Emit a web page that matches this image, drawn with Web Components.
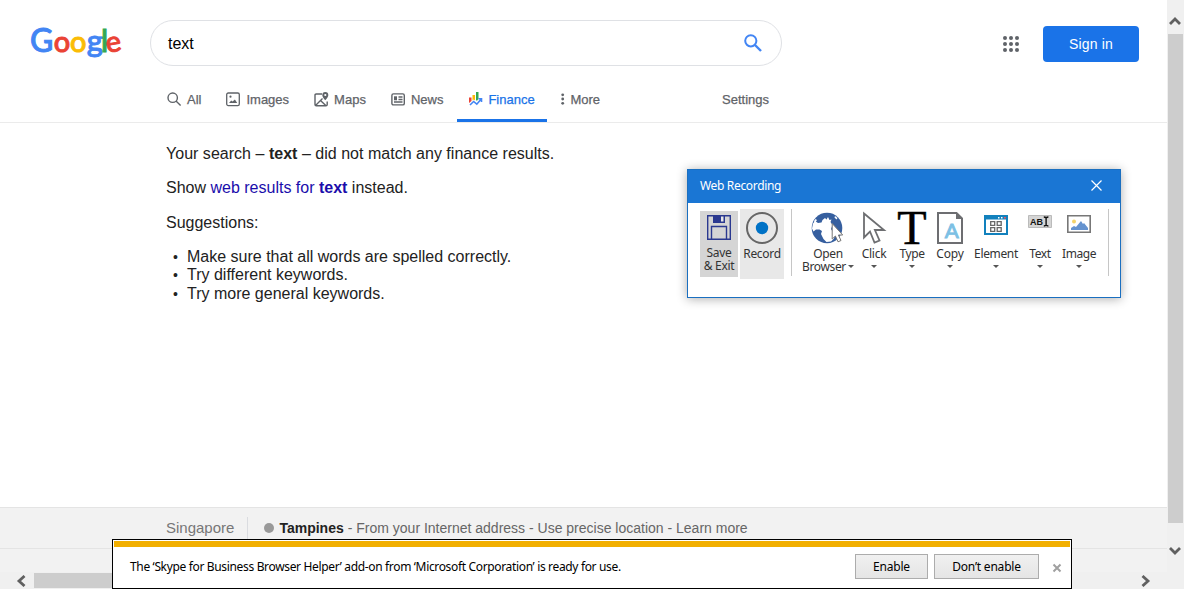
<!DOCTYPE html>
<html lang="en">
<head>
<meta charset="utf-8">
<title>text - Search</title>
<style>
html,body{margin:0;height:100%;overflow:hidden;background:#fff}
body{font-family:"Liberation Sans",Arial,sans-serif;color:#222}
</style>
</head>
<body>
<search-app></search-app>
<script>
const define = (name, html) => {
  const t = document.createElement('template');
  t.innerHTML = html;
  customElements.define(name, class extends HTMLElement {
    constructor() {
      super();
      this.attachShadow({mode: 'open'}).append(t.content.cloneNode(true));
    }
  });
};

define('brand-logo', `
<style>:host{display:block;width:96px;height:46px}svg{display:block}</style>
<svg width="96" height="46" viewBox="0 0 96 46" font-family="Lato,sans-serif" font-weight="500" stroke-width=".9">
<text y="33.500"><tspan x="0" font-size="32" fill="#4285f4" stroke="#4285f4">G</tspan><tspan x="23.800" font-size="29" fill="#ea4335" stroke="#ea4335">o</tspan><tspan x="39.900" font-size="29" fill="#fbbc05" stroke="#fbbc05">o</tspan><tspan x="56.700" font-size="31" fill="#4285f4" stroke="#4285f4">g</tspan><tspan x="71" font-size="30" fill="#34a853" stroke="#34a853">l</tspan><tspan x="77.300" y="35" font-size="29" fill="#ea4335" stroke="#ea4335" rotate="-10">e</tspan></text>
</svg>`);

define('search-box', `
<style>
:host{display:flex;box-sizing:border-box;width:632px;height:46px;border:1px solid #dfe1e5;border-radius:23px;align-items:center;justify-content:space-between;padding:1px 19px 0 17px;font-size:16px;color:#000}
svg{display:block;margin-top:-2px}
span{padding-top:1px}
</style>
<span><slot></slot></span>
<svg width="18" height="18" viewBox="0 0 18 18" fill="none" stroke="#4285f4" stroke-width="2"><circle cx="6.8" cy="6.8" r="5.6"/><path d="M11 11l6 6" stroke-width="2.4"/></svg>`);

define('nav-tab', `
<style>
:host{display:flex;box-sizing:border-box;height:43px;align-items:center;color:#5f6368;font-size:13px;line-height:16px;padding-bottom:3px;white-space:nowrap;-webkit-text-stroke:.25px currentColor}
:host([active]){color:#1a73e8;box-shadow:inset 0 -3px #1a73e8}
::slotted(svg){display:block;margin-right:5px;flex:none}
span{padding-top:2px}
</style><slot name="icon"></slot><span><slot></slot></span>`);

define('page-header', `
<style>
:host{display:block;height:122px;border-bottom:1px solid #ebebeb}
.top{display:flex;height:79px;padding-top:0;box-sizing:border-box}
brand-logo{margin:18px 0 0 30px}
search-box{margin:20px 0 0 24px}
.apps{display:block;margin:36px 0 0 221px}
.sign{margin:26px 0 0 23px;width:96px;height:36px;border-radius:4px;background:#1a73e8;color:#fff;font-size:14px;letter-spacing:.2px;display:flex;align-items:center;justify-content:center}
nav{display:flex;height:43px}
.a{margin-left:167px}.b{margin-left:25px}.c{margin-left:25px}.d{margin-left:25px}
.e{margin-left:14px;width:90px;box-sizing:border-box;padding-left:12px}.f{margin-left:14px}.g{margin-left:122px}
</style>
<div class="top"><brand-logo></brand-logo><search-box>text</search-box>
<svg class="apps" width="17" height="17" viewBox="0 0 17 17" fill="#5f6368"><circle cx="2" cy="2" r="2"/><circle cx="8" cy="2" r="2"/><circle cx="14" cy="2" r="2"/><circle cx="2" cy="8" r="2"/><circle cx="8" cy="8" r="2"/><circle cx="14" cy="8" r="2"/><circle cx="2" cy="14" r="2"/><circle cx="8" cy="14" r="2"/><circle cx="14" cy="14" r="2"/></svg>
<div class="sign">Sign in</div></div>
<nav>
<nav-tab class="a"><svg slot="icon" width="15" height="15" viewBox="0 0 15 15" fill="none" stroke="#5f6368" stroke-width="1.4"><circle cx="5.7" cy="5.7" r="4.7"/><path d="M9 9l4.6 4.6"/></svg>All</nav-tab>
<nav-tab class="b"><svg slot="icon" width="15" height="15" viewBox="0 0 15 15" fill="none" stroke="#5f6368" stroke-width="1.3"><rect x=".7" y="1" width="12.6" height="12.6" rx="1.6"/><g fill="#5f6368" stroke="none"><circle cx="4.5" cy="4.7" r="1.1"/><path d="M3 11l2.2-2.6 1.4 1.2 2.3-2.2L11.200 11z"/></g></svg>Images</nav-tab>
<nav-tab class="c"><svg slot="icon" width="15" height="15" viewBox="0 0 15 15" fill="none" stroke="#5f6368" stroke-width="1.4"><path d="M8 2H2.200Q1 2 1 3.200V12.600Q1 13.800 2.200 13.800H12Q13.200 13.800 13.200 12.600V9.500M1.500 13.500L8.500 6.500M6.500 8.500L11.800 13.500"/><path d="M11.300 0a3 3 0 0 0-3 3c0 2.400 3 5.200 3 5.200s3-2.800 3-5.200a3 3 0 0 0-3-3zm0 1.900a1.100 1.100 0 1 1 0 2.200 1.100 1.100 0 0 1 0-2.200z" fill="#5f6368" stroke="none"/></svg>Maps</nav-tab>
<nav-tab class="d"><svg slot="icon" width="15" height="15" viewBox="0 0 15 15" fill="none" stroke="#5f6368" stroke-width="1.4"><rect x=".9" y="1.900" width="12.400" height="11" rx="1.500"/><path d="M7.500 5h4M7.500 7.500h4M3 10h8.500"/><path d="M3 4.300h3v4H3z" fill="#5f6368" stroke="none"/></svg>News</nav-tab>
<nav-tab class="e" active><svg slot="icon" width="14" height="15" viewBox="0 0 14 15" style="margin-right:5px"><path fill="#ea4335" d="M0 5.500h2.500V9L0 11z"/><path fill="#fbbc05" d="M3.500 3H6v5.500L4.700 7.500 3.500 8.500z"/><path fill="#34a853" d="M7 0h2.500v7L8 8.700 7 8.300z"/><path d="M1 13l3.600-3.500 3.200 2.700L12.200 7M9.500 6.800h3V10" fill="none" stroke="#4285f4" stroke-width="1.600"/></svg>Finance</nav-tab>
<nav-tab class="f"><svg slot="icon" width="4" height="12" viewBox="0 0 4 12" fill="#5f6368"><circle cx="1.700" cy="1.800" r="1.400"/><circle cx="1.700" cy="6" r="1.400"/><circle cx="1.700" cy="10.300" r="1.400"/></svg>More</nav-tab>
<nav-tab class="g">Settings</nav-tab>
</nav>`);

define('no-results', `
<style>
:host{display:block;padding:22px 0 0 166px;font-size:16px;line-height:18px;height:384px;box-sizing:border-box;color:#222}
p{margin:0 0 16px}.w{letter-spacing:.02px}.s{margin-bottom:16px;padding-top:1px}a{color:#1a0dab}
ul{margin:0;padding:0;list-style:none}li{display:flex;height:18px}li:last-child{padding-top:1px}
li::before{content:"•";width:14px;padding-left:7px;font-size:14px}
</style>
<p class="w">Your search – <b>text</b> – did not match any finance results.</p>
<p>Show <a>web results for <b>text</b></a> instead.</p>
<p class="s">Suggestions:</p>
<ul><li>Make sure that all words are spelled correctly.</li><li>Try different keywords.</li><li>Try more general keywords.</li></ul>`);

define('page-footer', `
<style>
:host{display:block;height:65px;background:#f2f2f2;border-top:1px solid #e4e4e4;box-sizing:border-box}
.row{display:flex;align-items:center;height:40px;border-bottom:1px solid #e4e4e4;padding-left:166px;font-size:14px;color:#70757a;white-space:nowrap}
.c{font-size:15px;padding:0 13px 2px 0;color:#777}
.l{display:flex;align-items:center;border-left:1px solid #dadce0;height:22px;padding-left:16px}
i{width:10px;height:10px;border-radius:50%;background:#999;margin-right:5px}
b{color:#222;margin-right:4px}.t{color:#666}
</style>
<div class="row"><span class="c">Singapore</span><span class="l"><i></i><b>Tampines</b><span class="t">- From your Internet address - Use precise location - Learn more</span></span></div>`);

define('v-scroll', `
<style>
:host{display:flex;flex-direction:column;align-items:center;background:#f0f0f0;height:589px;box-sizing:border-box}
.up{margin-top:16px}.th{width:15px;height:489px;background:#cdcdcd;margin:8px 0 22px;align-self:flex-start;margin-left:1px}
svg{display:block;margin-left:-1px;flex:none}
</style>
<svg class="up" width="12" height="10" viewBox="0 0 12 10" fill="none" stroke="#606060" stroke-width="2.800"><path d="M1 8l5-5 5 5"/></svg>
<div class="th"></div>
<svg width="12" height="10" viewBox="0 0 12 10" fill="none" stroke="#606060" stroke-width="2.800"><path d="M1 3l5 5 5-5"/></svg>`);

define('h-scroll', `
<style>
:host{display:flex;align-items:center;height:17px;background:#f0f0f0;padding:0 16px 0 16px;box-sizing:border-box}
.th{height:15px;width:700px;background:#cdcdcd;margin-left:8px;margin-right:auto}
</style>
<svg width="10" height="12" viewBox="0 0 10 12" fill="none" stroke="#606060" stroke-width="2.800"><path d="M8.500 1l-5.500 5 5.500 5"/></svg>
<div class="th"></div>
<svg width="10" height="12" viewBox="0 0 10 12" fill="none" stroke="#606060" stroke-width="2.800"><path d="M1.500 1l5.500 5-5.500 5"/></svg>`);

define('tool-button', `
<style>
:host{display:flex;flex-direction:column;align-items:center;font:12px/13px "Noto Sans","Segoe UI",sans-serif;color:#333;white-space:nowrap;text-align:center;box-sizing:border-box;flex:none}
.ic{height:35px;display:flex;align-items:flex-start;justify-content:center}
.lb{height:13px}
.ar{display:none;border:3px solid transparent;border-top-color:#555;border-bottom:0;margin-top:5px}
:host([menu]) .ar{display:block}
</style>
<div class="ic"><slot name="icon"></slot></div><div class="lb"><slot></slot></div><div class="ar"></div>`);

define('recorder-window', `
<style>
:host{display:flex;flex-direction:column;box-sizing:border-box;width:434px;height:129px;background:#fff;border:1px solid #1a6fc0;box-shadow:0 1px 10px rgba(0,0,0,.32);font-family:"Noto Sans","Segoe UI",sans-serif}
header{height:33px;background:#1a76d4;color:#fff;display:flex;align-items:center;justify-content:space-between;padding:0 18px 2px 12px;box-sizing:border-box;font-size:12px;letter-spacing:-.33px}
.bar{display:flex;align-items:flex-start;padding-left:12px}
svg{display:block;overflow:visible}
.save{width:38px;height:66px;background:#d5d5d5;margin-top:8px;padding-top:0}
.rec{width:44px;height:70px;background:#e8e8e8;margin:6px 0 0 2px;padding-top:3px}
.line{width:1px;height:67px;background:#c6c6c6;margin:6px 0 0 7px}
.m{margin-top:9px}
em{font-style:normal;display:inline-block;border:3px solid transparent;border-top-color:#555;border-bottom:0;vertical-align:3px;margin-left:2px}
</style>
<header><span>Web Recording</span><svg width="11" height="11" viewBox="0 0 11 11" stroke="#fff" stroke-width="1.200"><path d="M.5.5l10 10M10.500.5l-10 10"/></svg></header>
<div class="bar">
<tool-button class="save" style="letter-spacing:-.35px"><svg slot="icon" width="24" height="25" viewBox="0 0 24 25" style="margin-top:4px" fill="none" stroke="#2b3990" stroke-width="1.400"><path d="M.7.7h22.600v23.500H.7z"/><path d="M4.500 24V11.500h15V24"/><path d="M6 0h12v8H6z" fill="#2b3990" stroke="none"/><path d="M14 1.500h2.500v5H14z" fill="#e8e8e8" stroke="none"/></svg>Save<br>&amp; Exit</tool-button>
<tool-button class="rec" style="letter-spacing:-.3px"><svg slot="icon" width="32" height="32" viewBox="0 0 32 32"><circle cx="16" cy="16" r="15" fill="none" stroke="#666" stroke-width="2"/><circle cx="16" cy="16" r="6.200" fill="#0072c6"/></svg>Record</tool-button>
<div class="line"></div>
<tool-button class="m" style="width:52px;margin-left:10px;letter-spacing:-.38px"><svg slot="icon" width="32" height="32" viewBox="0 0 32 32" style="margin-left:-2px"><circle cx="16" cy="16" r="15.300" fill="#365f9f"/><path fill="#fff" d="M11.500 8l2.500-2 1.500 1.500 1.500-2.500 1.500 3 2-.5-1 2.500 2 3-1.500 4 1.500 2.500 2.500 2-1 5-3 3-4.500.5-3-3-2.500-5 1-3-2.500-1.500-3.500 0-2.500 2-1.500-3 1-5 2-2.500 3 2 3.500-.5z"/><path d="M3 9l1.500-2 1.500 1-2 3zM24 4l2.500 2-1 1.500-2-2z" fill="#fff"/><path d="M21.200 11.500v15.500l3.200-3 2.600 5.800 3-1.300-2.600-5.500h4.300z" fill="#fff" stroke="#777" stroke-width="1"/></svg>Open<br>Browser<em></em></tool-button>
<tool-button class="m" menu style="width:30px;margin-left:5px;letter-spacing:-.25px"><svg slot="icon" width="24" height="33" viewBox="0 0 24 33" fill="#fff" stroke="#6d6e71" stroke-width="1.800"><path d="M2 1.500v24l6-6 4.500 11 5-2-4.600-10.500H22z"/></svg>Click</tool-button>
<tool-button class="m" menu style="width:28px;margin-left:9px;letter-spacing:-.4px"><svg slot="icon" width="28" height="32" viewBox="0 0 28 32"><text x="14" y="32" text-anchor="middle" font-family="Liberation Serif,serif" font-size="48" letter-spacing="0" stroke="#000" stroke-width=".5" fill="#000">T</text></svg>Type</tool-button>
<tool-button class="m" menu style="width:28px;margin-left:10px;letter-spacing:-.2px"><svg slot="icon" width="26" height="32" viewBox="0 0 26 32"><path d="M1 1h18.500l5.500 5.500v24.500H1z" fill="#fff" stroke="#6d6e71" stroke-width="2"/><path d="M19 1l6 6h-6z" fill="#6d6e71"/><text x="14.800" y="26" text-anchor="middle" font-family="Liberation Sans" font-size="21" letter-spacing="0" stroke="#7cc0e4" stroke-width=".9" fill="#7cc0e4">A</text></svg>Copy</tool-button>
<tool-button class="m" menu style="width:44px;margin-left:10px;letter-spacing:-.35px"><svg slot="icon" width="24" height="20" viewBox="0 0 24 20" style="margin-top:3px"><path d="M1 1h22v18H1z" fill="#fff" stroke="#1281bd" stroke-width="2"/><path d="M0 0h24v4.500H0z" fill="#1281bd"/><path d="M14 2h1.500v1.500H14zM17 2h1.500v1.500H17z" fill="#fff"/><path d="M20 2h1.800v1.500H20z" fill="#ff4e57"/><g fill="none" stroke="#666" stroke-width="1.300"><path d="M6.700 6.700h4v3.600h-4zM13.200 6.700h4v3.600h-4zM6.700 12.700h4v3.600h-4zM13.200 12.700h4v3.600h-4z"/></g></svg>Element</tool-button>
<tool-button class="m" menu style="width:22px;margin-left:11px;letter-spacing:-.4px"><svg slot="icon" width="24" height="13" viewBox="0 0 24 13" style="margin-top:3px"><path d="M.5.5h23v12H.5z" fill="#d5d5d5" stroke="#bbb"/><text x="2" y="10" font-family="Liberation Sans" font-size="9.500" font-weight="bold" textLength="13" lengthAdjust="spacingAndGlyphs" letter-spacing="0" fill="#111">AB</text><path d="M15.800 2q1.800 0 2.300.8.500-.8 2.300-.8M18.100 2.500v8M15.800 11q1.800 0 2.300-.8.500.8 2.300.8" fill="none" stroke="#111" stroke-width="1.400"/></svg>Text</tool-button>
<tool-button class="m" menu style="width:34px;margin-left:11px;letter-spacing:-.45px"><svg slot="icon" width="24" height="18" viewBox="0 0 24 18" style="margin-top:3px"><path d="M.8.8h22.400v16.400H.8z" fill="#fff" stroke="#777" stroke-width="1.600"/><circle cx="7" cy="6.500" r="2" fill="#f4d46a"/><path d="M4 15v-2l3-2 2 1 5-6 2 3 1-1 4 5v2z" fill="#6593cf"/></svg>Image</tool-button>
<div class="line" style="margin-left:12px"></div>
</div>`);

define('addon-bar', `
<style>
:host{display:flex;flex-direction:column;box-sizing:border-box;width:960px;height:50px;border:1px solid #000;background:#fff;padding:1px;font:12px/16px "Noto Sans","Segoe UI",sans-serif;color:#000}
.y{height:6px;background:#f2af00;flex:none}
.r{display:flex;align-items:center;height:40px;padding:0 8px 0 16px}
.m{letter-spacing:-.34px;margin-right:auto;white-space:nowrap}
button{font:inherit;color:#000;letter-spacing:-.2px;height:25px;box-sizing:border-box;border:1px solid #acacac;background:linear-gradient(#f0f0f0,#e5e5e5);padding:0;margin:-1px 0 0 6px}
svg{margin:2px 0 0 13px}
</style>
<div class="y"></div>
<div class="r"><span class="m">The ‘Skype for Business Browser Helper’ add-on from ‘Microsoft Corporation’ is ready for use.</span>
<button style="width:73px">Enable</button><button style="width:105px">Don’t enable</button>
<svg width="10" height="10" viewBox="0 0 10 10" stroke="#a0a0a0" stroke-width="2"><path d="M1.500 1.500l7 7M8.500 1.500l-7 7"/></svg></div>`);

define('search-app', `
<style>
:host{display:grid;grid-template-columns:1167px 17px;width:1184px;height:589px;position:relative;overflow:hidden}
main{height:589px}
recorder-window{position:absolute;left:687px;top:169px}
addon-bar{position:absolute;left:112px;top:539px}
</style>
<main><page-header></page-header><no-results></no-results><page-footer></page-footer><h-scroll></h-scroll></main>
<v-scroll></v-scroll>
<recorder-window></recorder-window>
<addon-bar></addon-bar>`);
</script>
</body>
</html>
